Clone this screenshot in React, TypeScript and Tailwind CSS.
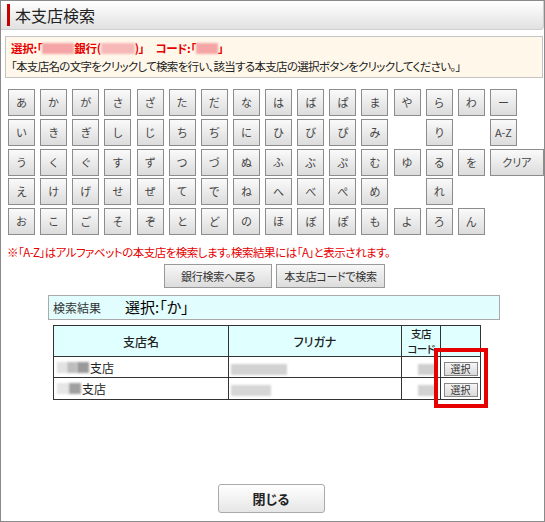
import React from 'react';

const rows: (string | null)[][] = [
  ['あ', 'か', 'が', 'さ', 'ざ', 'た', 'だ', 'な', 'は', 'ば', 'ぱ', 'ま', 'や', 'ら', 'わ', 'ー'],
  ['い', 'き', 'ぎ', 'し', 'じ', 'ち', 'ぢ', 'に', 'ひ', 'び', 'ぴ', 'み', null, 'り', null, 'A-Z'],
  ['う', 'く', 'ぐ', 'す', 'ず', 'つ', 'づ', 'ぬ', 'ふ', 'ぶ', 'ぷ', 'む', 'ゆ', 'る', 'を', 'クリア'],
  ['え', 'け', 'げ', 'せ', 'ぜ', 'て', 'で', 'ね', 'へ', 'べ', 'ぺ', 'め', null, 'れ', null, null],
  ['お', 'こ', 'ご', 'そ', 'ぞ', 'と', 'ど', 'の', 'ほ', 'ぼ', 'ぽ', 'も', 'よ', 'ろ', 'ん', null],
];

// ぼかし部分
function Blur({ w, c = 'bg-[#cfcfcf]' }: { w: string; c?: string }) {
  return <span className={`inline-block h-[11px] align-middle blur-[1px] ${w} ${c}`} />;
}

function KanaButton({ label }: { label: string }) {
  const wide = label === 'クリア';
  return (
    <button
      className={`h-[27px] ${wide ? 'w-[54px]' : 'w-[27px]'} border border-[#8c8c8c] bg-linear-to-b from-[#fafafa] to-[#dcdcdc] text-[11px] text-[#444] leading-none`}
    >
      {label}
    </button>
  );
}

function SelectButton() {
  return (
    <button className="h-[14px] w-[34px] border border-[#888] bg-linear-to-b from-[#f6f6f6] to-[#dadada] align-middle text-[10px] leading-none text-[#333]">
      選択
    </button>
  );
}

export default function App() {
  return (
    <div className="relative flex h-[522px] w-[545px] flex-col overflow-hidden border border-[#8a8a8a] bg-white font-['Noto_Sans_CJK_JP',sans-serif] text-[#222] [font-feature-settings:'palt']">
      {/* タイトル */}
      <div className="flex h-[29px] items-center rounded-br-[4px] border-r border-b border-[#cfcfcf] bg-linear-to-b from-white to-[#e1e1e1]">
        <span className="ml-[6px] h-[22px] w-[3px] bg-[#c40000]" />
        <h1 className="ml-[5px] text-[16px] leading-none text-[#222]">本支店検索</h1>
      </div>

      {/* 選択情報 */}
      <div className="mt-[6px] mr-[1px] ml-[4px] flex h-[42px] flex-col justify-center gap-[3px] border border-[#c4c4c4] bg-[#fff8ea] pl-[5px]">
        <p className="flex items-center text-[11.5px] leading-[15px] font-semibold tracking-[-0.3px] text-[#e60000]">
          選択:「<Blur w="w-[32px]" c="bg-[#f5a5a5]" />銀行(<Blur w="w-[34px]" c="bg-[#f7b8b8]" />)」　コード:「
          <Blur w="w-[22px]" c="bg-[#f5a5a5]" />」
        </p>
        <p className="text-[11.5px] leading-[15px] tracking-[-0.7px] text-[#222]">
          「本支店名の文字をクリックして検索を行い、該当する本支店の選択ボタンをクリックしてください。」
        </p>
      </div>

      {/* 50音ボタン */}
      <div className="mt-[11px] ml-[7px] grid grid-cols-[repeat(16,27px)] gap-x-[5.13px] gap-y-[2.8px]">
        {rows.flat().map((k, i) => (k ? <KanaButton key={i} label={k} /> : <div key={i} />))}
      </div>

      <p className="mt-[9px] ml-[6px] text-[11.5px] leading-[16px] tracking-[-0.5px] text-[#e60000]">
        ※「A-Z」はアルファベットの本支店を検索します。検索結果には「A」と表示されます。
      </p>

      <div className="mt-[4px] flex justify-center gap-[4px] pl-[4px]">
        <button className="h-[24px] w-[108px] border border-[#999] bg-linear-to-b from-[#f7f7f7] to-[#dcdcdc] text-[11px] tracking-[-0.3px] text-[#333]">
          銀行検索へ戻る
        </button>
        <button className="h-[24px] w-[109px] border border-[#999] bg-linear-to-b from-[#f7f7f7] to-[#dcdcdc] text-[11px] tracking-[-0.3px] text-[#333]">
          本支店コードで検索
        </button>
      </div>

      {/* 検索結果 */}
      <div className="mt-[7px] ml-[47px] flex h-[25px] w-[452px] items-center border border-[#aaa] bg-[#e2fdfd]">
        <span className="ml-[4px] text-[12px] text-[#333]">検索結果</span>
        <span className="ml-[24px] text-[15px] text-black">選択:「か」</span>
      </div>

      <table className="mt-[5px] ml-[52px] w-[428px] border-collapse text-[12px] leading-[15px]">
        <thead>
          <tr className="h-[31px] bg-[#e0ffff]">
            <th className="w-[175px] border border-[#333] font-medium">支店名</th>
            <th className="w-[173px] border border-[#333] font-medium">フリガナ</th>
            <th className="w-[39px] border border-[#333] p-0 text-[10.5px] leading-[15px] font-medium tracking-[-0.5px]">
              <span className="block">支店</span>
              <span className="block">コード</span>
            </th>
            <th className="border border-[#333]" />
          </tr>
        </thead>
        <tbody>
          <tr className="h-[21px]">
            <td className="border border-[#333] p-0 pl-[3px]">
              <span className="flex items-center">
                <Blur w="w-[10px]" c="bg-[#e2e2e2]" />
                <Blur w="w-[10px]" c="bg-[#bdbdbd]" />
                <Blur w="w-[12px]" c="bg-[#9a9a9a]" />
                <span className="ml-[1px]">支店</span>
              </span>
            </td>
            <td className="border border-[#333] p-0 pl-[2px]">
              <Blur w="w-[56px]" c="bg-[#d2d2d2]" />
            </td>
            <td className="border border-[#333] p-0 pr-[4px] text-right">
              <Blur w="w-[18px]" c="bg-[#cfcfcf]" />
            </td>
            <td className="border border-[#333] p-0 text-center">
              <SelectButton />
            </td>
          </tr>
          <tr className="h-[22px]">
            <td className="border border-[#333] p-0 pl-[3px]">
              <span className="flex items-center">
                <Blur w="w-[12px]" c="bg-[#e6e6e6]" />
                <Blur w="w-[12px]" c="bg-[#a0a0a0]" />
                <span className="ml-[1px]">支店</span>
              </span>
            </td>
            <td className="border border-[#333] p-0 pl-[2px]">
              <Blur w="w-[40px]" c="bg-[#d6d6d6]" />
            </td>
            <td className="border border-[#333] p-0 pr-[4px] text-right">
              <Blur w="w-[18px]" c="bg-[#d2d2d2]" />
            </td>
            <td className="border border-[#333] p-0 text-center">
              <SelectButton />
            </td>
          </tr>
        </tbody>
      </table>

      {/* 選択ボタンの強調枠 */}
      <div className="absolute top-[347px] left-[433px] h-[60px] w-[54px] border-[4px] border-[#e60000]" />

      <div className="mt-auto mb-[8px] flex justify-center pr-[3px]">
        <button className="h-[29px] w-[107px] rounded-[3px] border border-[#aaa] bg-linear-to-b from-white to-[#e6e6e6] text-[13px] font-bold text-[#222]">
          閉じる
        </button>
      </div>
    </div>
  );
}
